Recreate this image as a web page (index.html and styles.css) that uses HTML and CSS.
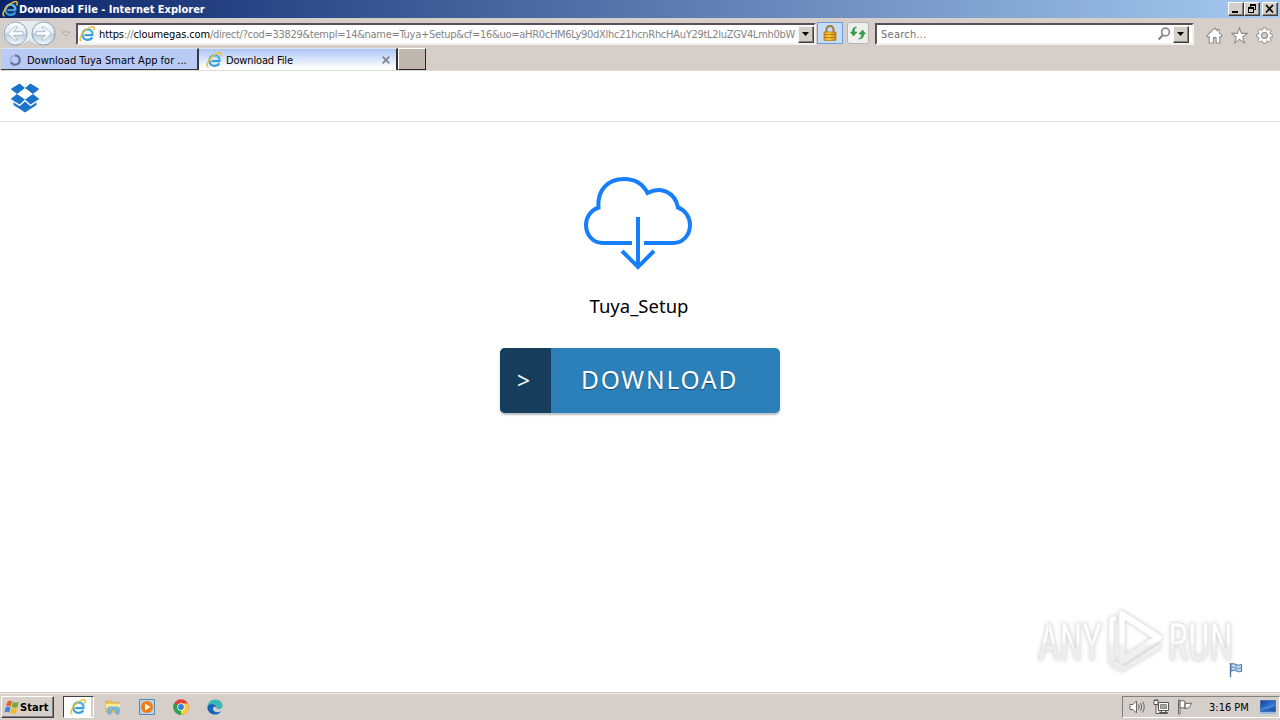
FILE: index.html
```html
<!DOCTYPE html>
<html lang="en">
<head>
<meta charset="utf-8">
<title>Download File</title>
<link rel="stylesheet" href="styles.css">
</head>
<body>
<svg class="defs" width="0" height="0">
  <defs>
    <linearGradient id="orb" x1="0" y1="0" x2="0" y2="1"><stop offset="0" stop-color="#fdfeff"/><stop offset=".46" stop-color="#e3ebf3"/><stop offset=".52" stop-color="#bccddd"/><stop offset="1" stop-color="#f2fafe"/></linearGradient>
    <linearGradient id="gold" x1="0" y1="0" x2="1" y2="0"><stop offset="0" stop-color="#e09a12"/><stop offset=".4" stop-color="#f9cf4c"/><stop offset="1" stop-color="#c98208"/></linearGradient>
    <linearGradient id="screen" x1="0" y1="0" x2="1" y2="1"><stop offset="0" stop-color="#153f96"/><stop offset=".5" stop-color="#2d6fd0"/><stop offset="1" stop-color="#1a4ba4"/></linearGradient>
    <linearGradient id="mark" gradientUnits="userSpaceOnUse" x1="0" y1="6" x2="0" y2="70"><stop offset=".5" stop-color="#fff"/><stop offset=".58" stop-color="#f0f0f0"/><stop offset="1" stop-color="#ececec"/></linearGradient>
  </defs>
  <symbol id="ie" viewBox="0 0 16 16">
    <path d="M14.3 9.100H5.500M13.500 9.100C13.500 5.600 11.500 3.500 8.600 3.500C5.600 3.500 3.400 5.700 3.400 8.700C3.400 11.800 5.500 13.800 8.500 13.800C10.700 13.800 12.400 12.800 13.300 11.300" fill="none" stroke="#3a9edd" stroke-width="2.300"/>
    <path d="M13 8.200C12.600 5.400 11 4 8.600 4C6 4 4 5.700 3.800 8.200" fill="none" stroke="#73cbf3" stroke-width="1.200"/>
    <path d="M2.500 15C-.4 14.700 1.400 9.400 5.400 5.200C9.400 1.200 14 -.4 15 1.300C15.500 2.100 15.200 3.300 14.600 4.400" fill="none" stroke="#edc22f" stroke-width="1.500"/>
  </symbol>
</svg>

<header class="titlebar">
  <svg class="title-icon" viewBox="0 0 16 16"><use href="#ie"/></svg>
  <span class="title-text">Download File - Internet Explorer</span>
  <div class="winbtns">
    <span class="winbtn"><svg viewBox="0 0 14 12"><path d="M3 8h6v2H3z"/></svg></span>
    <span class="winbtn"><svg viewBox="0 0 14 12"><path d="M5 1h6v6H9V6h1V3H6v1H5zM3 4h6v6H3zM4 6v3h4V6z" fill-rule="evenodd"/></svg></span>
    <span class="winbtn close"><svg viewBox="0 0 14 12"><path d="M3 2l7 7.500M10 2L3 9.500" stroke="#000" stroke-width="1.700"/></svg></span>
  </div>
</header>

<nav class="navbar">
  <svg class="orbs" viewBox="0 0 58 28">
    <path d="M15 1.500H43A12.500 12.500 0 0 1 43 27Q36 27 29 22Q22 27 15 27A12.500 12.500 0 0 1 15 1.500z" fill="#e9ebed" stroke="#c3c4c6"/>
    <circle cx="15.500" cy="14.500" r="11.500" fill="url(#orb)" stroke="#8e9fae"/>
    <circle cx="43.500" cy="14.500" r="11.500" fill="url(#orb)" stroke="#8e9fae"/>
    <path d="M8 14.500l6.500-6.500h3l-4 4.700H23v3.600h-9.500l4 4.700h-3z" fill="#fff" stroke="#9fb0c0" stroke-width=".8"/>
    <path d="M51 14.500L44.500 8h-3l4 4.700H36v3.600h9.500l-4 4.700h3z" fill="#fff" stroke="#9fb0c0" stroke-width=".8"/>
  </svg>
  <svg class="recent" viewBox="0 0 10 7"><path d="M1 1h8l-4 4z" fill="#dedad5" stroke="#aaa59f"/></svg>
  <div class="field address">
    <svg class="ico16" viewBox="0 0 16 16"><use href="#ie"/></svg>
    <span class="url"><b>https</b>://<b class="host">cloumegas.com</b><span class="path">/direct/?cod=33829&amp;templ=14&amp;name=Tuya+Setup&amp;cf=16&amp;uo=aHR0cHM6Ly90dXlhc21hcnRhcHAuY29tL2luZGV4Lmh0bW</span></span>
    <span class="drop"><svg viewBox="0 0 8 5"><path d="M0 0h7L3.500 4z"/></svg></span>
  </div>
  <span class="lock"><svg viewBox="0 0 14 16"><path d="M3.500 7V4.500a3.500 3.500 0 0 1 7 0V7" fill="none" stroke="#a27c2a" stroke-width="2"/><path d="M1 7h12v8.500H1z" fill="url(#gold)" stroke="#a8700c" stroke-width=".6"/><path d="M1 9.500h12M1 12.500h12" stroke="#b97b0c"/></svg></span>
  <span class="refresh"><svg viewBox="0 0 16 14"><path d="M6.500 1Q4 2 4.500 6H7L3.500 10 .5 6H2.500Q2 1 6.500 1z" fill="#35a447" stroke="#187c2c" stroke-width=".5"/><path d="M8.500 13Q12 12 11.500 8H9L12.500 4 15.500 8H13.500Q14 13 8.500 13z" fill="#35a447" stroke="#187c2c" stroke-width=".5"/></svg></span>
  <div class="field search">
    <span class="placeholder">Search...</span>
    <svg class="glass" viewBox="0 0 14 14"><circle cx="8.500" cy="5" r="3.900" fill="none" stroke="#858585" stroke-width="1.600"/><path d="M6 8L1.500 12.500" stroke="#858585" stroke-width="2.200"/></svg>
    <span class="drop"><svg viewBox="0 0 8 5"><path d="M0 0h7L3.500 4z"/></svg></span>
  </div>
  <div class="tools">
    <svg viewBox="0 0 16 16"><path d="M8 1L.7 8.300l1.500 1.400.8-.7V15h4v-5h2.500v5h3.500V9l.8.7 1.500-1.400L12.500 5.500V2.300h-2V3.500z" fill="#fff" stroke="#8c8c8c"/></svg>
    <svg viewBox="0 0 16 16"><path d="M8 .8l1.900 5.200h5.400l-4.300 3.400 1.600 5.600L8 11.700 3.400 15 5 9.400.7 6h5.400z" fill="#fff" stroke="#8c8c8c"/></svg>
    <svg viewBox="0 0 16 16"><path d="M6.800.6h2.400l.4 2 1.300.5 1.700-1.100 1.700 1.700-1.100 1.700.5 1.300 2 .4v2l-2 .4-.5 1.300 1.100 1.700-1.700 1.700-1.700-1.100-1.300.5-.4 2H6.800l-.4-2-1.300-.5-1.700 1.100-1.700-1.700 1.100-1.700-.5-1.300-2-.4v-2l2-.4.5-1.300L1.700 3.700l1.700-1.700 1.700 1.100 1.300-.5z" fill="#fff" stroke="#8c8c8c" stroke-width=".9"/><circle cx="8" cy="8" r="2.800" fill="#d6cec8" stroke="#8c8c8c"/></svg>
  </div>
</nav>

<div class="tabs">
  <div class="tab idle"><svg class="spinner" viewBox="0 0 12 12"><circle cx="6" cy="6" r="4.600" fill="none" stroke="#a3b3dc" stroke-width="2"/><path d="M6 1.400A4.600 4.600 0 1 1 2 8" fill="none" stroke="#66759b" stroke-width="2"/></svg><span>Download Tuya Smart App for ...</span></div>
  <div class="tab active"><svg class="ico16" viewBox="0 0 16 16"><use href="#ie"/></svg><span>Download File</span><svg class="x" viewBox="0 0 8 8"><path d="M.7.700l6.600 6.600M7.300.700L.7 7.300" stroke="#7d838f" stroke-width="1.700"/></svg></div>
  <div class="newtab"></div>
</div>

<main class="page">
  <div class="brandbar">
    <svg class="dropbox" viewBox="0 0 30 30" fill="#1a75c8"><path d="M9.500.5L15 5 7 11 .7 6z"/><path d="M20.500.5L15 5l8 6 6.300-5z"/><path d="M7 11l8 5.500-5.500 5L.7 16z"/><path d="M23 11l-8 5.500 5.500 5 8.800-5.500z"/><path d="M3.500 21v-1.800L9.500 23.200 15 18.600l5.500 4.600 6-4V22L15 29.500 3.500 22z"/></svg>
  </div>
  <section class="content">
    <svg class="cloud" viewBox="0 0 110 94" fill="none" stroke="#167efb" stroke-width="4">
      <path d="M49 68H20C10 68 3 60 3 50C3 42 8 35 15.500 32.500C14 15 25 4 41 4C52 4 60 9 64.500 18C78 11 92 17 95 32.500C102 35 107 42 107 50C107 60 100 68 90 68H61"/>
      <path d="M55 42V92M39 76L55 92 71 76"/>
    </svg>
    <h1 class="filename">Tuya_Setup</h1>
    <a class="download"><span class="arrow">&gt;</span><span class="label">DOWNLOAD</span></a>
  </section>
  <svg class="watermark" viewBox="0 0 204 76">
    <g class="wm">
      <text x="3" y="57" font-size="52" textLength="64" lengthAdjust="spacingAndGlyphs">ANY</text>
      <text x="133" y="57" font-size="52" textLength="65" lengthAdjust="spacingAndGlyphs">RUN</text>
      <path d="M74 17Q74 14 77 13.500L81 13V18H79V57L90 63 126 40V45L89 67.500Q86 69 84 67L76 62Q74 61 74 58z"/>
      <path fill-rule="evenodd" d="M84 10Q84 6 88 8L126 32Q129 34.500 126 37L90 60Q84 63 84 57zM90 17V52L117 35z"/>
    </g>
  </svg>
  <svg class="pageflag" viewBox="0 0 14 16"><path d="M1.500 1v14" stroke="#53749b" stroke-width="1.400"/><path d="M2 2q3-1 5 .5t5.500 0v7q-3 1-5-.5T2 9z" fill="#b9d5f0" stroke="#4876a7"/><path d="M2 5.500q3-1 5 .5t5 0M7 3v6" stroke="#769fc9" fill="none"/></svg>
</main>

<footer class="taskbar">
  <button class="start"><svg viewBox="0 0 16 16"><path d="M3.500 2.500Q6 .8 8 2.500L6.800 7.500Q4.500 6 2 7.500z" fill="#e86228"/><path d="M9 2.800Q12 4.500 14.800 3L13.500 8Q10.500 9.500 7.800 7.800z" fill="#70ad34"/><path d="M1.700 8.500Q4.300 7 6.500 8.500L5.300 13.500Q2.800 12 .4 13.500z" fill="#3f83d5"/><path d="M7.500 8.800Q10.500 10.500 13.200 9L12 14Q9 15.500 6.300 13.800z" fill="#f4ba28"/></svg><span>Start</span></button>
  <div class="apps">
    <span class="app running"><svg viewBox="0 0 16 16"><use href="#ie"/></svg></span>
    <span class="app"><svg viewBox="0 0 16 16"><path d="M1 2h5l1 1.500h7V13H1z" fill="#eec65b" stroke="#c7a04a" stroke-width=".6"/><path d="M1 5h14v4H1z" fill="#fae89e"/><path d="M3 15V9.500Q3 8 4.500 8h8Q14 8 14 9.500V15h-3v-4H6v4z" fill="#83bddb" stroke="#5692b5" stroke-width=".6"/></svg></span>
    <span class="app"><svg viewBox="0 0 16 16"><path d="M.5.500h15v15H.5z" fill="#b8d2e8" stroke="#5688b3"/><circle cx="8" cy="8" r="6" fill="#ef7d12"/><path d="M6 4.500v7L11.500 8z" fill="#fff"/></svg></span>
    <span class="app"><svg viewBox="0 0 16 16"><circle cx="8" cy="8" r="7.700" fill="#e34133"/><path d="M8 8L1.300 4.200A7.700 7.700 0 0 0 8 15.700z" fill="#26a550"/><path d="M8 8v7.700A7.700 7.700 0 0 0 14.700 4.500H8z" fill="#fccc31"/><circle cx="8" cy="8" r="3.700" fill="#fff"/><circle cx="8" cy="8" r="2.900" fill="#327ce1"/></svg></span>
    <span class="app"><svg viewBox="0 0 16 16"><path d="M.4 8C.6 3.500 4 .4 8 .4c4.500 0 7.600 3 7.600 6.200 0 2.300-1.700 3.600-3.700 3.600-1.700 0-2.600-.7-2.400-1.600C10 6.500 8.500 5 6 5 3 5 1 6.600.4 8z" fill="#36b9b5"/><path d="M.4 8C1 5.800 3.200 4.800 5.500 5c2.500.1 4 1.600 4 3.200C7 7 5 9 6.500 11.500c1.600 2.300 5 2 7.500.7-1.300 2.200-3.400 3.400-6 3.400C3.600 15.600.2 12.400.4 8z" fill="#1765b8"/></svg></span>
  </div>
  <div class="tray">
    <svg class="speaker" viewBox="0 0 16 16" fill="none" stroke="#666"><path d="M1 5.500h3L7.500 2v12L4 10.500H1z" fill="#fff"/><path d="M9.500 5.500q1.500 2.500 0 5M11.500 4q2.500 4 0 8M13.500 2.500q3.500 5.500 0 11"/></svg>
    <svg class="network" viewBox="0 0 16 16" fill="#fff" stroke="#555"><path d="M5.500 3.500h10v8h-10z"/><path d="M7.500 5.500h6v4h-6z" fill="#a6a6a6" stroke="#888"/><path d="M8.500 11.500h4v2h-4zM6.500 13.500h8v1h-8z"/><path d="M1 1.500v4h4v-4zM2 0v2M4 0v2M3 5.500v9h3"/></svg>
    <svg class="flag" viewBox="0 0 16 16" fill="#fff" stroke="#666"><path d="M1.500 1v14h1.500V1z"/><path d="M3 2q3-1 5 .5v7q-2-1.500-5-.5zM8 4q3 1 6.500 0-1 3-3 5-1.500.7-3.500 0z"/></svg>
    <span class="clock">3:16 PM</span>
    <svg class="desktop" viewBox="0 0 16 14"><path d="M.5.500h15v11H.5z" fill="url(#screen)" stroke="#4470ad"/><path d="M1 8q7-1 14-5v3Q9 9 1 10z" fill="#639de2" opacity=".5"/><path d="M0 12h16v2H0z" fill="#9abbe0"/></svg>
  </div>
</footer>
</body>
</html>
```
FILE: styles.css
```css
* { box-sizing: border-box; }
html, body { margin: 0; height: 100%; overflow: hidden; }
body { display: flex; flex-direction: column; width: 1280px; height: 720px; background: #d4d0c8; font-family: "DejaVu Sans Condensed", "DejaVu Sans", sans-serif; font-stretch: condensed; font-size: 11px; color: #000; }
svg { display: block; flex: none; }
.defs { position: absolute; }
.ico16 { width: 16px; height: 16px; }

.titlebar { height: 18px; flex: none; display: flex; align-items: center; padding: 0 2px; background: linear-gradient(90deg, #0a246a, #a6caf0); color: #fff; }
.title-icon { width: 16px; height: 16px; margin-right: 1px; }
.title-text { font-weight: bold; white-space: nowrap; }
.winbtns { display: flex; margin-left: auto; }
.winbtn { width: 16px; height: 14px; background: #d4d0c8; border: 1px solid; border-color: #fff #404040 #404040 #fff; box-shadow: inset -1px -1px #808080; }
.winbtn svg { width: 14px; height: 12px; }
.close { margin-left: 2px; }

.navbar { height: 30px; flex: none; display: flex; align-items: flex-start; background: #d6cec8; padding: 1px 7px 0 0; }
.orbs { width: 58px; height: 28px; }
.recent { width: 10px; height: 7px; margin: 12px 5px 0 3px; }
.field { height: 22px; margin-top: 4px; display: flex; align-items: center; background: #fff; border: 2px solid; border-color: #5b4f55 #f4f0ec #f4f0ec #5b4f55; white-space: nowrap; }
.address { width: 740px; padding-left: 1px; }
.url { width: 700px; margin-left: 4px; color: #858585; letter-spacing: -.12px; }
.url b { font-weight: normal; color: #000; }
.path { letter-spacing: -.29px; }
.drop { width: 16px; height: 17px; margin-left: auto; display: flex; align-items: center; justify-content: center; background: #d4d0c8; border: 1px solid; border-color: #f5f2ee #404040 #404040 #f5f2ee; box-shadow: inset -1px -1px #808080; flex: none; }
.drop svg { width: 8px; height: 5px; }
.lock { width: 26px; height: 22px; margin: 3px 0 0 1px; background: #c7ddf7; border: 1px solid #6ba0dd; display: flex; align-items: center; justify-content: center; }
.lock svg { width: 14px; height: 16px; }
.refresh { width: 22px; height: 22px; margin: 3px 0 0 4px; background: #edf0ed; border: 1px solid #b7b5b3; border-radius: 3px; display: flex; align-items: center; justify-content: center; }
.refresh svg { width: 16px; height: 14px; }
.search { width: 319px; margin-left: 6px; padding: 0 3px 0 4px; }
.placeholder { color: #6f6f6f; letter-spacing: .25px; }
.glass { width: 14px; height: 14px; margin: 0 2px 0 auto; }
.search .drop { margin-left: 0; }
.tools { display: flex; gap: 8px; margin: 8px 0 0 auto; }
.tools svg { width: 17px; height: 17px; }

.tabs { height: 23px; flex: none; display: flex; background: #d6cec8; padding-left: 1px; border-bottom: 1px solid #dedad6; }
.tab { display: flex; align-items: center; height: 22px; white-space: nowrap; border-top: 1px solid #dce5f8; padding-top: 1px; }
.idle { width: 198px; padding: 2px 0 0 8px; background: #b9cbf4; border-right: 2px solid #353641; border-bottom: 1px solid #35373f; }
.spinner { width: 12px; height: 12px; margin-right: 6px; }
.active { width: 199px; padding: 1px 6px 0 7px; background: linear-gradient(#adc6f5, #fff 90%); border-right: 2px solid #302c30; }
.active .ico16 { margin-right: 4px; }
.active span { letter-spacing: -.15px; }
.x { width: 8px; height: 8px; margin-left: auto; }
.newtab { width: 28px; height: 22px; background: #bfb7ae; border: 1px solid; border-color: #fff #252525 #252525 #fff; }

.page { position: relative; height: 621px; flex: none; background: #fff; }
.brandbar { height: 51px; border-bottom: 1px solid #e5e5e5; padding: 12px 10px; }
.dropbox { width: 30px; height: 30px; }
.content { display: flex; flex-direction: column; align-items: center; padding-top: 53px; font-family: "Noto Sans", sans-serif; }
.cloud { width: 110px; height: 94px; margin-right: 4px; overflow: visible; }
.filename { margin: 24px 2px 0 0; font-size: 18.5px; font-weight: normal; line-height: 26px; }
.download { display: flex; width: 280px; height: 65px; margin-top: 29px; border-radius: 5px; overflow: hidden; background: #2b80b9; box-shadow: 0 2px 2px #b8bec5; color: #fff; text-shadow: 0 1px 1px #17486d; line-height: 65px; }
.arrow { width: 51px; padding-right: 4px; text-align: center; background: #163e5c; font-size: 23px; }
.label { padding-left: 30px; font-size: 24.5px; letter-spacing: 1.8px; line-height: 63px; }
.watermark { position: absolute; left: 1035px; top: 532px; width: 204px; height: 76px; overflow: visible; }
.wm { fill: url(#mark); stroke: #e8e8e8; stroke-width: .6; filter: drop-shadow(0 0 2px #ccc); font-family: "Roboto", sans-serif; font-weight: 400; }
.pageflag { position: absolute; left: 1229px; top: 591px; width: 14px; height: 16px; }

.taskbar { height: 28px; flex: none; display: flex; align-items: flex-start; background: #d6cec8; border-top: 1px solid #c8c4bf; box-shadow: inset 0 1px #f5f2ee; padding: 3px 0 0 1px; }
.start { width: 53px; height: 22px; display: flex; align-items: center; padding: 0 2px; background: #d6cec8; border: 1px solid; border-color: #fff #404040 #404040 #fff; box-shadow: inset -1px -1px #808080; font: bold 11px "DejaVu Sans Condensed", sans-serif; color: #000; }
.start svg { width: 16px; height: 16px; }
.start span { letter-spacing: .1px; }
.apps { display: flex; margin-left: 9px; gap: 4px; }
.app { width: 30px; height: 22px; display: flex; align-items: center; justify-content: center; }
.app svg { width: 16px; height: 16px; }
.running { background: #fff; border: 1px solid; border-color: #404040 #fff #fff #404040; box-shadow: inset -2px 0 #d6cec8; width: 31px; padding-right: 1px; }
.tray { width: 158px; height: 22px; margin-left: auto; display: flex; align-items: center; border: 1px solid; border-color: #808080 #fff #fff #808080; padding-left: 6px; }
.tray svg { width: 16px; height: 16px; }
.speaker, .network { margin-right: 8px; }
.clock { margin-left: 16px; width: 42px; white-space: nowrap; }
.tray .desktop { margin-left: 9px; height: 14px; }
```
